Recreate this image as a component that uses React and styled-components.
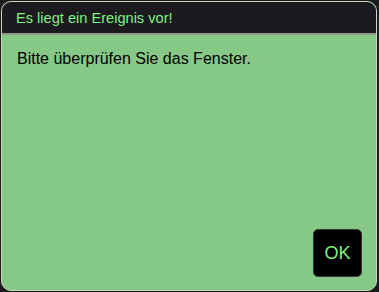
import React from "react";
import styled, {createGlobalStyle} from "styled-components";

const Global = createGlobalStyle`
  html, body {
    margin: 0;
    padding: 0;
    background: #1b1a1c;
  }
  body {
    font-family: "Liberation Sans", Arial, sans-serif;
  }
`;

const Page = styled.div`
  width: 379px;
  height: 292px;
  padding: 1px 2px 1px 1px;
  box-sizing: border-box;
`;

const Dialog = styled.div`
  height: 100%;
  display: flex;
  flex-direction: column;
  border: 1px solid #c9d6c4;
  border-radius: 10px;
  overflow: hidden;
  background: #86c986;
  box-sizing: border-box;
`;

const Header = styled.div`
  height: 31px;
  display: flex;
  align-items: center;
  padding: 0 14px;
  background: #1c1a1e;
  color: #7ef27e;
  font-size: 14.6px;
  border-bottom: 2px solid #8d9a8a;
`;

const Body = styled.div`
  flex: 1;
  display: flex;
  flex-direction: column;
  padding: 14px 14px 13px 15px;
`;

const Message = styled.p`
  margin: 0;
  color: #000;
  font-size: 16px;
  line-height: 19px;
  flex: 1;
`;

const Footer = styled.div`
  display: flex;
  justify-content: flex-end;
`;

const OkButton = styled.button`
  width: 49px;
  height: 48px;
  padding: 0;
  background: #000;
  color: #7ef27e;
  border: 1px solid #2e3a2d;
  border-radius: 5px;
  font-family: "Liberation Sans", Arial, sans-serif;
  font-size: 18px;
  cursor: pointer;
`;

export default function App() {
  return (
    <Page>
      <Global/>
      <Dialog>
        <Header>Es liegt ein Ereignis vor!</Header>
        <Body>
          <Message>Bitte überprüfen Sie das Fenster.</Message>
          <Footer>
            <OkButton>OK</OkButton>
          </Footer>
        </Body>
      </Dialog>
    </Page>
  );
}
